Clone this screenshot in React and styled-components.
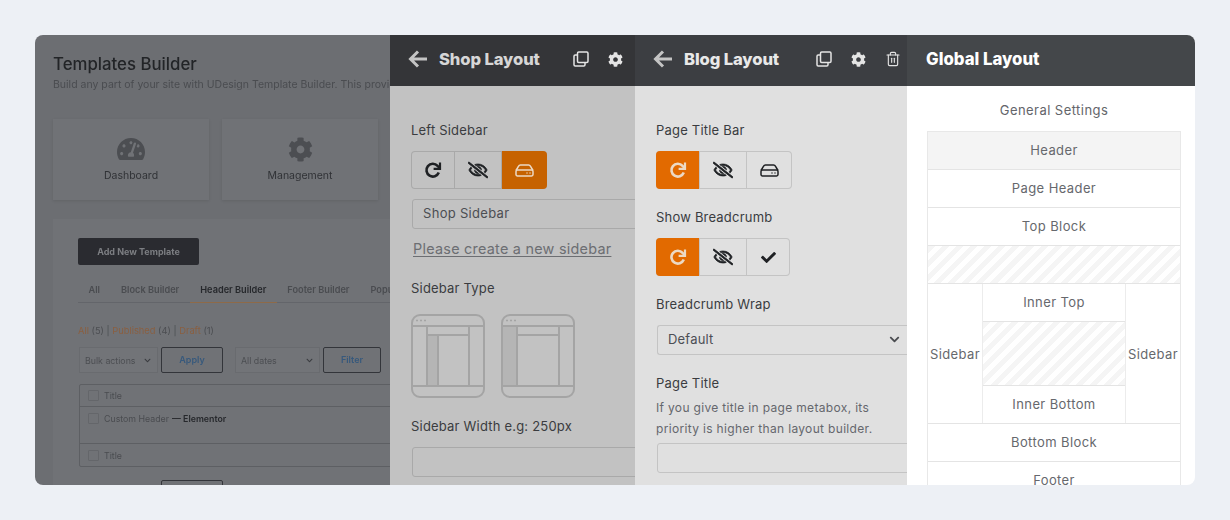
import React from "react";
import styled, { createGlobalStyle } from "styled-components";
import { FaCog, FaCheck, FaRegEyeSlash, FaTachometerAlt, FaChevronDown } from "react-icons/fa";
import { Trash2 } from "lucide-react";

const GlobalStyle = createGlobalStyle`
  html, body { margin: 0; padding: 0; background: #edf0f5; }
  * { box-sizing: border-box; }
  body { font-family: Inter, "Open Sans", sans-serif; }
`;

const hatch = "repeating-linear-gradient(135deg, #f5f5f5 0 5px, #fff 5px 10px)";

function ArrowBack() {
  return (
    <svg width="20" height="18" viewBox="0 0 20 18" fill="none" stroke="#c4c4c4" strokeWidth="3">
      <path d="M19 9H3M10 1.5 2.5 9l7.5 7.5" />
    </svg>
  );
}

function CopyIcon() {
  return (
    <svg width="16" height="16" viewBox="0 0 16 16" fill="none" stroke="#e4e4e4" strokeWidth="1.5">
      <rect x="4.5" y="1" width="10.5" height="10.5" rx="1.2" />
      <path d="M4.5 4H2.2C1.5 4 1 4.5 1 5.2v8.6c0 .7.5 1.2 1.2 1.2h8.6c.7 0 1.2-.5 1.2-1.2v-2.3" />
    </svg>
  );
}

function RedoIcon() {
  return (
    <svg width="18" height="18" viewBox="0 0 18 18" fill="none" stroke="currentColor" strokeWidth="2.6">
      <path d="M14.8 11.6a6.4 6.4 0 1 1-1.2-6.7l2 2" />
      <path d="M16 1.4v6.4H9.6" strokeWidth="2.2" fill="none" />
    </svg>
  );
}

function DriveIcon() {
  return (
    <svg width="19" height="13" viewBox="0 0 19 13" fill="none" stroke="currentColor" strokeWidth="1.5">
      <path d="M1 6.5 3.6 2.2C4 1.4 4.6 1 5.4 1h8.2c.8 0 1.4.4 1.8 1.2L18 6.5" />
      <rect x="1" y="6" width="17" height="6" rx="1.4" />
      <path d="M11.5 9h1M14.5 9h1" />
    </svg>
  );
}

function SidebarShape({ variant }) {
  const left = variant === "left";
  return (
    <svg width="74" height="84" viewBox="0 0 74 84" fill="none" stroke="#a4a4a4" strokeWidth="2">
      <rect x={left ? 16 : 1} y={left ? 21 : 12} width={left ? 11 : 15} height={left ? 51 : 60} fill="#b5b5b5" stroke="none" />
      <rect x="1" y="1" width="72" height="82" rx="8" />
      <path d="M1 12h72M1 72h72M16 12v60M58 12v60M16 21h42" />
      {left && <path d="M27 21v51" />}
      <path d="M5 6.5h2M9 6.5h2M13 6.5h2" strokeWidth="1.6" />
    </svg>
  );
}

function EyeOff() {
  return <FaRegEyeSlash size={20} stroke="currentColor" strokeWidth={24} />;
}

export default function App() {
  return (
    <>
      <GlobalStyle />
      <Page>
        <Frame>
          <DimPanel>
            <DimContent>
              <PageTitle>Templates Builder</PageTitle>
              <PageSub>Build any part of your site with UDesign Template Builder. This provides you with</PageSub>
              <TopCards>
                <TopCard>
                  <CardIcon><FaTachometerAlt size={28} /></CardIcon>
                  <span>Dashboard</span>
                </TopCard>
                <TopCard>
                  <CardIcon><FaCog size={25} /></CardIcon>
                  <span>Management</span>
                </TopCard>
              </TopCards>
              <MainCard>
                <AddButton>Add New Template</AddButton>
                <Tabs>
                  <Tab>All</Tab>
                  <Tab>Block Builder</Tab>
                  <Tab $active>Header Builder</Tab>
                  <Tab>Footer Builder</Tab>
                  <Tab>Popup Builder</Tab>
                </Tabs>
                <StatusLine>
                  <b>All</b> (5) | <b>Published</b> (4) | <b>Draft</b> (1)
                </StatusLine>
                <Controls>
                  <DimSelect $width={79}>Bulk actions<FaChevronDown size={7} /></DimSelect>
                  <DimButton $width={62}>Apply</DimButton>
                  <DimSelect $width={85} $gap={9}>All dates<FaChevronDown size={7} /></DimSelect>
                  <DimButton $width={58}>Filter</DimButton>
                </Controls>
                <DimTable>
                  <DimRow><Tick />Title</DimRow>
                  <DimRow $tall><Tick />Custom Header <strong>— Elementor</strong></DimRow>
                  <DimRow $last><Tick />Title</DimRow>
                </DimTable>
                <Controls $bottom>
                  <Spacer />
                  <DimButton $width={62}>Apply</DimButton>
                </Controls>
              </MainCard>
            </DimContent>
          </DimPanel>

          <SidePanel $width={245} $bg="#c2c2c2" $head="#343538">
            <PanelHead $pad={18}>
              <ArrowBack />
              <HeadTitle $color="#d6d6d6">Shop Layout</HeadTitle>
              <HeadIcons $gap={19} $mr={12}>
                <CopyIcon />
                <FaCog size={15} color="#e4e4e4" />
              </HeadIcons>
            </PanelHead>
            <PanelBody>
              <FieldLabel>Left Sidebar</FieldLabel>
              <ButtonGroup $bg="#c2c2c2" $border="#a9a9a9">
                <GroupButton $width={43}><RedoIcon /></GroupButton>
                <GroupButton $width={47}><EyeOff /></GroupButton>
                <GroupButton $width={46} $activeBg="#c66200"><DriveIcon /></GroupButton>
              </ButtonGroup>
              <TextBox $mt={10} $border="#a9a9a9" $color="#4c4e52">Shop Sidebar</TextBox>
              <CreateLink>Please create a new sidebar</CreateLink>
              <FieldLabel $mt={19} $mb={16}>Sidebar Type</FieldLabel>
              <Shapes>
                <SidebarShape variant="left" />
                <SidebarShape variant="wide" />
              </Shapes>
              <FieldLabel $mt={18}>Sidebar Width e.g: 250px</FieldLabel>
              <TextBox $border="#a9a9a9" />
            </PanelBody>
          </SidePanel>

          <SidePanel $width={272} $bg="#e0e0e0" $head="#3c3e42">
            <PanelHead $pad={18}>
              <ArrowBack />
              <HeadTitle $color="#e8e8e8">Blog Layout</HeadTitle>
              <HeadIcons $gap={19} $mr={6}>
                <CopyIcon />
                <FaCog size={15} color="#e4e4e4" />
                <Trash2 size={16} color="#e4e4e4" strokeWidth={1.7} />
              </HeadIcons>
            </PanelHead>
            <PanelBody>
              <FieldLabel>Page Title Bar</FieldLabel>
              <ButtonGroup $bg="#e0e0e0" $border="#c4c4c4">
                <GroupButton $width={43} $activeBg="#e26a00"><RedoIcon /></GroupButton>
                <GroupButton $width={47}><EyeOff /></GroupButton>
                <GroupButton $width={46}><DriveIcon /></GroupButton>
              </ButtonGroup>
              <FieldLabel $mt={18}>Show Breadcrumb</FieldLabel>
              <ButtonGroup $bg="#e0e0e0" $border="#c4c4c4">
                <GroupButton $width={43} $activeBg="#e26a00"><RedoIcon /></GroupButton>
                <GroupButton $width={47}><EyeOff /></GroupButton>
                <GroupButton $width={44}><FaCheck size={15} /></GroupButton>
              </ButtonGroup>
              <FieldLabel $mt={18}>Breadcrumb Wrap</FieldLabel>
              <SelectBox>
                Default
                <FaChevronDown size={11} color="#4a4c50" />
              </SelectBox>
              <FieldLabel $mt={18}>Page Title</FieldLabel>
              <Hint>If you give title in page metabox, its<br />priority is higher than layout builder.</Hint>
              <TextBox $mt={4} $border="#c4c4c4" />
            </PanelBody>
          </SidePanel>

          <GlobalPanel>
            <PanelHead $pad={19}>
              <GlobalTitle>Global Layout</GlobalTitle>
            </PanelHead>
            <GeneralTitle>General Settings</GeneralTitle>
            <LayoutTable>
              <LayoutRow $filled>Header</LayoutRow>
              <LayoutRow>Page Header</LayoutRow>
              <LayoutRow>Top Block</LayoutRow>
              <LayoutRow $hatched />
              <MiddleRow>
                <SideCell>Sidebar</SideCell>
                <CenterCol>
                  <InnerRow>Inner Top</InnerRow>
                  <InnerHatch />
                  <InnerRow $last>Inner Bottom</InnerRow>
                </CenterCol>
                <SideCell>Sidebar</SideCell>
              </MiddleRow>
              <LayoutRow>Bottom Block</LayoutRow>
              <LayoutRow>Footer</LayoutRow>
            </LayoutTable>
          </GlobalPanel>
        </Frame>
      </Page>
    </>
  );
}

const Page = styled.div`
  width: 1230px;
  height: 520px;
  padding: 35px;
  background: #edf0f5;
`;

const Frame = styled.div`
  display: flex;
  width: 1160px;
  height: 450px;
  border-radius: 8px;
  overflow: hidden;
`;

const DimPanel = styled.div`
  flex: 0 0 355px;
  overflow: hidden;
  background: #6c6e72;
`;

const DimContent = styled.div`
  width: 700px;
  padding: 18px 0 0 18px;
  filter: blur(0.5px);
`;

const PageTitle = styled.div`
  height: 22px;
  font-size: 16.8px;
  line-height: 22px;
  font-weight: 500;
  color: #222427;
`;

const PageSub = styled.div`
  margin-top: 2px;
  font-size: 10.5px;
  line-height: 16px;
  white-space: nowrap;
  color: #4a4c50;
`;

const TopCards = styled.div`
  display: flex;
  gap: 13px;
  margin-top: 26px;
`;

const TopCard = styled.div`
  flex: 0 0 156px;
  height: 81px;
  padding-top: 16px;
  display: flex;
  flex-direction: column;
  align-items: center;
  gap: 6px;
  background: #707276;
  box-shadow: 0 1px 3px rgba(0, 0, 0, 0.1);
  color: #4c4e52;
  span {
    font-size: 10.5px;
    line-height: 14px;
    color: #303236;
  }
`;

const CardIcon = styled.div`
  display: flex;
  align-items: center;
  justify-content: center;
  height: 28px;
`;

const MainCard = styled.div`
  margin-top: 19px;
  padding: 19px 0 0 25px;
  background: #707276;
  height: 300px;
`;

const AddButton = styled.div`
  width: 121px;
  height: 27px;
  border-radius: 2px;
  background: #2a2b30;
  color: #7c7e82;
  font-size: 9px;
  font-weight: 700;
  line-height: 27px;
  text-align: center;
`;

const Tabs = styled.div`
  display: flex;
  margin-top: 11px;
  height: 27px;
  border-bottom: 1px solid #63656a;
`;

const Tab = styled.div`
  padding: 7px 10.5px 0;
  font-size: 9.2px;
  line-height: 14px;
  font-weight: 600;
  white-space: nowrap;
  color: ${(props) => (props.$active ? "#26282c" : "#4a4c50")};
  border-bottom: ${(props) => (props.$active ? "1px solid #8e6a48" : "none")};
  height: 27px;
`;

const StatusLine = styled.div`
  margin-top: 21px;
  font-size: 9.3px;
  line-height: 14px;
  color: #4c4e52;
  b {
    font-weight: 400;
    color: #8a5f40;
  }
`;

const Controls = styled.div`
  display: flex;
  gap: 3px;
  margin: ${(props) => (props.$bottom ? "13px 0 0 1px" : "9px 0 0 1px")};
`;

const Spacer = styled.div`
  width: 79px;
`;

const DimSelect = styled.div`
  display: flex;
  align-items: center;
  justify-content: space-between;
  width: ${(props) => props.$width}px;
  height: 26px;
  margin-left: ${(props) => props.$gap || 0}px;
  padding: 0 6px 0 5px;
  background: #727478;
  border: 1px solid #696b6f;
  font-size: 8.8px;
  color: #4c4e52;
  svg {
    color: #3a3c40;
  }
`;

const DimButton = styled.div`
  width: ${(props) => props.$width}px;
  height: 26px;
  border: 1px solid #33353a;
  border-radius: 2px;
  text-align: center;
  font-size: 9px;
  font-weight: 600;
  line-height: 24px;
  color: #37597c;
`;

const DimTable = styled.div`
  margin: 11px 0 0 1px;
  width: 500px;
  border: 1px solid #5d5f63;
  border-radius: 2px;
`;

const DimRow = styled.div`
  display: flex;
  align-items: ${(props) => (props.$tall ? "flex-start" : "center")};
  gap: 5px;
  height: ${(props) => (props.$tall ? 37 : 22)}px;
  padding: ${(props) => (props.$tall ? "6px" : "0")} 0 0 8px;
  font-size: 8.8px;
  color: #4a4c50;
  border-bottom: ${(props) => (props.$last ? "none" : "1px solid #5d5f63")};
  strong {
    font-weight: 600;
    color: #26282c;
    margin-left: -2px;
  }
`;

const Tick = styled.span`
  flex: 0 0 11px;
  height: 11px;
  border: 1px solid #64666a;
  border-radius: 1px;
`;

const SidePanel = styled.div`
  flex: 0 0 ${(props) => props.$width}px;
  overflow: hidden;
  background: ${(props) => props.$bg};
  & > div:first-child {
    background: ${(props) => props.$head};
  }
`;

const PanelHead = styled.div`
  display: flex;
  align-items: center;
  height: 51px;
  padding-left: ${(props) => props.$pad}px;
  padding-bottom: 3px;
`;

const HeadTitle = styled.div`
  margin-left: 11px;
  font-size: 16.6px;
  font-weight: 800;
  letter-spacing: -0.1px;
  white-space: nowrap;
  color: ${(props) => props.$color};
`;

const HeadIcons = styled.div`
  display: flex;
  align-items: center;
  gap: ${(props) => props.$gap}px;
  margin-left: auto;
  margin-right: ${(props) => props.$mr}px;
`;

const PanelBody = styled.div`
  width: 300px;
  padding: 34px 0 0 21px;
`;

const FieldLabel = styled.div`
  height: 20px;
  margin-top: ${(props) => props.$mt || 0}px;
  margin-bottom: ${(props) => props.$mb || 11}px;
  font-size: 13px;
  letter-spacing: 0.2px;
  line-height: 20px;
  white-space: nowrap;
  color: #3a3c40;
`;

const ButtonGroup = styled.div`
  display: inline-flex;
  vertical-align: top;
  height: 38px;
  border-radius: 4px;
  overflow: hidden;
  background: ${(props) => props.$bg};
  box-shadow: inset 0 0 0 1px ${(props) => props.$border};
  & > div + div {
    border-left: 1px solid ${(props) => props.$border};
  }
`;

const GroupButton = styled.div`
  display: flex;
  align-items: center;
  justify-content: center;
  width: ${(props) => props.$width}px;
  background: ${(props) => props.$activeBg || "transparent"};
  color: ${(props) => (props.$activeBg ? "#ecd9c4" : "#1f2124")};
`;

const TextBox = styled.div`
  display: flex;
  align-items: center;
  width: 290px;
  height: 30px;
  margin: ${(props) => props.$mt || 0}px 0 0 1px;
  padding: 0 0 2px 10px;
  border: 1px solid ${(props) => props.$border};
  border-radius: 3px;
  font-size: 13px;
  letter-spacing: 0.3px;
  color: ${(props) => props.$color || "inherit"};
`;

const CreateLink = styled.div`
  margin: 10px 0 0 2px;
  height: 20px;
  font-size: 14.4px;
  letter-spacing: 0.25px;
  line-height: 20px;
  white-space: nowrap;
  color: #6c6e72;
  text-decoration: underline;
  text-underline-offset: 2px;
`;

const Shapes = styled.div`
  display: flex;
  gap: 16px;
  svg {
    display: block;
  }
`;

const SelectBox = styled.div`
  display: flex;
  align-items: center;
  justify-content: space-between;
  width: 250px;
  height: 30px;
  margin-left: 1px;
  padding: 0 7px 2px 10px;
  border: 1px solid #c4c4c4;
  border-right: none;
  border-radius: 3px 0 0 3px;
  font-size: 13px;
  letter-spacing: 0.2px;
  color: #4c4e55;
`;

const Hint = styled.div`
  margin-top: -7px;
  font-size: 12px;
  line-height: 21px;
  letter-spacing: 0.33px;
  white-space: nowrap;
  color: #65676d;
`;

const GlobalPanel = styled.div`
  flex: 1;
  overflow: hidden;
  background: #fff;
  & > div:first-child {
    background: #44474a;
  }
`;

const GlobalTitle = styled.div`
  font-size: 16.8px;
  font-weight: 800;
  color: #fff;
`;

const GeneralTitle = styled.div`
  width: 294px;
  height: 45px;
  padding-top: 14px;
  text-align: center;
  font-size: 13px;
  letter-spacing: 0.45px;
  line-height: 20px;
  color: #63656a;
`;

const LayoutTable = styled.div`
  width: 254px;
  margin-left: 20px;
  border: 1px solid #e8e8e8;
  border-bottom: none;
  font-size: 13px;
  letter-spacing: 0.4px;
  color: #66686d;
  text-align: center;
`;

const LayoutRow = styled.div`
  height: 38px;
  line-height: 37px;
  border-bottom: 1px solid #e4e4e4;
  background: ${(props) => (props.$filled ? "#f4f4f4" : props.$hatched ? hatch : "#fff")};
`;

const MiddleRow = styled.div`
  display: flex;
  height: 140px;
  border-bottom: 1px solid #e4e4e4;
`;

const SideCell = styled.div`
  flex: 0 0 54px;
  display: flex;
  align-items: center;
  justify-content: center;
`;

const CenterCol = styled.div`
  flex: 1;
  border-left: 1px solid #ececec;
  border-right: 1px solid #ececec;
`;

const InnerRow = styled.div`
  height: ${(props) => (props.$last ? 37 : 38)}px;
  line-height: 37px;
  border-bottom: ${(props) => (props.$last ? "none" : "1px solid #e4e4e4")};
`;

const InnerHatch = styled.div`
  height: 64px;
  border-bottom: 1px solid #e4e4e4;
  background: ${hatch};
`;
